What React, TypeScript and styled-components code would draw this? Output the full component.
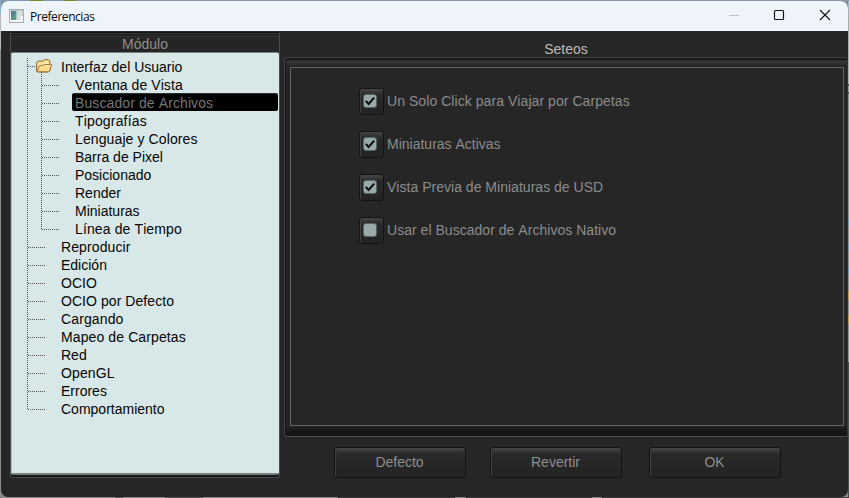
import React from 'react';
import styled, { createGlobalStyle, css } from 'styled-components';

const GlobalStyle = createGlobalStyle`
  * { box-sizing: border-box; }
  html, body { margin: 0; height: 100%; overflow: hidden; }
  body { font-family: "Liberation Sans", Arial, sans-serif; font-size: 14px; font-kerning: none; }
`;

const Desktop = styled.div`
  width: 849px;
  height: 498px;
  padding: 1px;
  background:
    linear-gradient(90deg, #7f9bbc 0 30px, #748b2a 30px 43px, #7f9bbc 43px 64px, #748b2a 64px 76px, #8796ae 76px 100%) 0 0 / 100% 1px no-repeat,
    linear-gradient(90deg, #8b8b8b 0 115px, #555 115px 123px, #8b8b8b 123px 165px, #555 165px 203px, #8b8b8b 203px 338px, #3a3a3a 338px 455px, #8a8a8a 455px 466px, #3a3a3a 466px 592px, #8a8a8a 592px 602px, #3a3a3a 602px 100%) 0 497px / 100% 1px no-repeat,
    linear-gradient(#8fb0cc 0 14px, #b5b9bc 14px 50px, #8c8c8c 50px 498px) 0 0 / 1px 100% no-repeat,
    linear-gradient(#9bb8cf 0 10px, #a9adb0 10px 84px, #555 84px 86px, #999 86px 92px, #555 92px 94px, #8f8f8f 94px 218px, #6d9db4 218px 226px, #8f8f8f 226px 244px, #6d9db4 244px 250px, #8f8f8f 250px 267px, #6d9db4 267px 274px, #8f8f8f 274px 291px, #b79a4c 291px 300px, #8f8f8f 300px 315px, #b79a4c 315px 324px, #8f8f8f 324px 362px, #4c4c4c 362px 498px) 848px 0 / 1px 100% no-repeat,
    #858b92;
`;

const Window = styled.div`
  height: 496px;
  width: 847px;
  border-radius: 7px;
  overflow: hidden;
  background: #262626;
  display: flex;
  flex-direction: column;
`;

const TitleBar = styled.header`
  flex: 0 0 30px;
  background: #eff4fb;
  color: #111;
  display: flex;
  align-items: center;
  padding-left: 8px;
  font: 12px "Open Sans", sans-serif;
`;

const Caption = styled.span`
  flex: 1;
  margin: 0 0 0 6px;
  letter-spacing: -0.45px;
  color: #080808;
`;

const Controls = styled.div`
  display: flex;
  width: 137px;
  svg { flex: 0 0 46px; height: 30px; display: block; }
`;

const Body = styled.main`
  flex: 1;
  display: flex;
`;

const ModulePanel = styled.section`
  width: 270px;
  height: 446px;
  margin: 1px 4px 0 9px;
  border: 1px solid #484b4b;
  border-top-color: #111;
  border-radius: 3px;
  background: #151515;
`;

const ModuleTitle = styled.h2`
  margin: 0;
  height: 19px;
  font: 14px/23px "Liberation Sans", Arial, sans-serif;
  font-kerning: none;
  text-align: center;
  color: #8f8f8f;
  background: linear-gradient(#3a3a3a 0 1px, #191919 1px 2px, #2c2c2c 2px, #252525 8px);
`;

const Tree = styled.ul`
  margin: 0;
  padding: 5px 1px 0 16px;
  height: 423px;
  list-style: none;
  border: 1px solid #718080;
  border-width: 1px 0 2px 1px;
  border-left-color: #b3c0c0;
  border-radius: 2px;
  background: #d8e8e8;
`;

const dots = (dir: string) => css`
  background: repeating-linear-gradient(${dir}, #4c5151 0 1px, transparent 1px 2px);
`;

const Row = styled.li<{ $child?: boolean; $first?: boolean; $last?: boolean }>`
  position: relative;
  display: flex;
  height: 18px;
  margin-left: -1px;
  padding-left: ${p => (p.$child ? 45 : 31)}px;
  color: #050505;
  line-height: 18px;
  white-space: nowrap;

  &::before {
    content: "";
    position: absolute;
    left: 0;
    top: 0;
    width: 1px;
    height: ${p => (p.$last ? 10 : 18)}px;
    ${dots('180deg')}
  }
  &::after {
    content: "";
    position: absolute;
    left: ${p => (p.$child ? 15 : 1)}px;
    top: ${p => (p.$first ? 8 : 9)}px;
    width: ${p => (p.$first ? 7 : 17)}px;
    height: 1px;
    ${dots('90deg')}
  }
`;

const Branch = styled.i<{ $end?: boolean; $start?: boolean }>`
  position: absolute;
  left: 14px;
  top: ${p => (p.$start ? 14 : 0)}px;
  width: 1px;
  height: ${p => (p.$start ? 4 : p.$end ? 10 : 18)}px;
  ${dots('180deg')}
`;

const Label = styled.span<{ $selected?: boolean; $track?: number }>`
  padding-left: 3px;
  height: 18px;
  letter-spacing: ${p => p.$track ?? 0}px;
  ${p => p.$selected && css`
    flex: 1;
    margin-top: -1px;
    border-radius: 2px;
    border-top: 1px solid #29302f;
    background: #000;
    color: #757575;
  `}
`;

const FolderIcon = styled.svg`
  position: absolute;
  left: 8px;
  top: 0;
`;

const Settings = styled.section`
  flex: 1;
  display: flex;
  flex-direction: column;
`;

const SettingsTitle = styled.h2`
  margin: 0;
  height: 26px;
  font: 14px/36px "Liberation Sans", Arial, sans-serif;
  font-kerning: none;
  color: #bcbcbc;
  text-align: center;
`;

const Frame = styled.div`
  height: 380px;
  border: 1px solid #424242;
  border-right-color: #343434;
  border-bottom-color: #505050;
  border-radius: 3px;
  padding: 9px 3px 10px 5px;
  box-shadow: inset 1px 1px #161616;
  background:
    linear-gradient(#111 0 1px, #1d1d1d 1px 2px, #393939 3px, #2b2b2b 7px, #242424 9px) 0 0 / 100% 9px no-repeat,
    linear-gradient(#242424, #1d1d1d 3px, #121212 7px, #191919 8px, #101010 10px) 0 100% / 100% 10px no-repeat,
    #242424;
`;

const Options = styled.div`
  height: 359px;
  border: 1px solid #646464;
  background: #262626;
  padding: 20px 0 0 68px;
  display: flex;
  flex-direction: column;
  gap: 16px;
`;

const Option = styled.label<{ $track?: number }>`
  height: 27px;
  display: flex;
  align-items: flex-start;
  gap: 3px;
  color: #8c8c8c;
  line-height: 26px;
  letter-spacing: ${p => p.$track ?? 0}px;
`;

const raised = css`
  border: 1px solid #131313;
  border-radius: 3px;
  box-shadow: inset 1px 0 #424242, inset 0 1px #444;
  background: linear-gradient(#464646 0, #373737 3px, #292929 6px, #232323 100%);
`;

const CheckButton = styled.span`
  width: 25px;
  height: 27px;
  padding: 5px 0 0 3px;
  ${raised}
  svg { display: block; }
`;

const Actions = styled.footer`
  display: flex;
  padding: 10px 0 0 50px;
`;

const Action = styled.button<{ $gap?: number }>`
  width: 132px;
  height: 31px;
  margin: 0 0 0 ${p => p.$gap ?? 0}px;
  padding: 0 1px 1px 0;
  font: 14px "Liberation Sans", Arial, sans-serif;
  font-kerning: none;
  color: #8e8e8e;
  ${raised}
`;

interface Item { text: string; track?: number }

const interfaceItems: Item[] = [
  { text: 'Ventana de Vista', track: 0.07 },
  { text: 'Buscador de Archivos', track: 0.1 },
  { text: 'Tipografías', track: 0.16 },
  { text: 'Lenguaje y Colores', track: 0.11 },
  { text: 'Barra de Pixel' },
  { text: 'Posicionado' },
  { text: 'Render' },
  { text: 'Miniaturas' },
  { text: 'Línea de Tiempo', track: 0.12 },
];
const modules: Item[] = [
  { text: 'Reproducir', track: 0.1 },
  { text: 'Edición' },
  { text: 'OCIO' },
  { text: 'OCIO por Defecto', track: 0.06 },
  { text: 'Cargando', track: 0.12 },
  { text: 'Mapeo de Carpetas', track: 0.11 },
  { text: 'Red' },
  { text: 'OpenGL', track: 0.1 },
  { text: 'Errores' },
  { text: 'Comportamiento' },
];
const options: (Item & { on: boolean })[] = [
  { text: 'Un Solo Click para Viajar por Carpetas', on: true, track: 0.06 },
  { text: 'Miniaturas Activas', on: true },
  { text: 'Vista Previa de Miniaturas de USD', on: true, track: 0.02 },
  { text: 'Usar el Buscador de Archivos Nativo', on: false, track: 0.03 },
];

const AppIcon = () => (
  <svg width="15" height="14" viewBox="0 0 15 14">
    <defs>
      <linearGradient id="pane" x1="0" y1="0" x2="1" y2="1">
        <stop stopColor="#4877a4" /><stop offset="1" stopColor="#59ad7b" />
      </linearGradient>
    </defs>
    <rect x=".5" y=".5" width="14" height="13" fill="#f5f6f7" stroke="#a6abb0" />
    <path d="M1 1.5h13" stroke="#c5cbd1" />
    <path d="M2 2h5.5v9H2z" fill="url(#pane)" />
    <path d="M8 2h3.5v9H8z" fill="#d5dce2" /><path d="M12 2h2v5h-2z" fill="#c8ddcf" />
  </svg>
);

const Folder = () => (
  <FolderIcon width="18" height="16" viewBox="0 0 18 16">
    <path d="M1.5 13V4.5L3 3h5l1.5-1.5h4L15 3v9.5L13.5 14H2.5z" fill="#e8bd66" stroke="#9b7440" />
    <path d="M2.5 12V5l1-1h5L10 2.5h3l1 1.5v2.5H5z" fill="#ffe7a6" />
    <path d="M2 13.8 4.2 8h4l1.5-1.5h7L14.8 12.5l-1.3 1.3z" fill="#ffda87" stroke="#9b7440" />
    <path d="M4.8 9h4L10.2 7.5h5.3" fill="none" stroke="#fff2c0" />
  </FolderIcon>
);

const CheckMark = ({ on }: { on: boolean }) => (
  <svg width="14" height="14" viewBox="0 0 14 14">
    <rect x=".5" y=".5" width="13" height="13" rx="2.5" fill="#99aaaa" stroke="#586363" />
    {on && <path d="M2.8 6.8 5.6 10l5.6-6.4" fill="none" stroke="#050707" strokeWidth="2" />}
  </svg>
);

export default function App() {
  return (
    <Desktop>
      <GlobalStyle />
      <Window>
        <TitleBar>
          <AppIcon />
          <Caption>Preferencias</Caption>
          <Controls>
            <svg viewBox="0 0 46 30"><path d="M18 14.5h10" stroke="#bdc1c6" /></svg>
            <svg viewBox="0 0 46 30"><rect x="17.5" y="9.5" width="9" height="9" rx="1" fill="none" stroke="#111" strokeWidth="1.2" /></svg>
            <svg viewBox="0 0 46 30"><path d="m17 9 10 10M27 9 17 19" stroke="#111" strokeWidth="1.1" /></svg>
          </Controls>
        </TitleBar>
        <Body>
          <ModulePanel>
            <ModuleTitle>Módulo</ModuleTitle>
            <Tree>
              <Row $first><Folder /><Branch $start /><Label>Interfaz del Usuario</Label></Row>
              {interfaceItems.map(({ text, track }, i) => (
                <Row key={text} $child>
                  <Branch $end={i === interfaceItems.length - 1} />
                  <Label $selected={i === 1} $track={track}>{text}</Label>
                </Row>
              ))}
              {modules.map(({ text, track }, i) => (
                <Row key={text} $last={i === modules.length - 1}><Label $track={track}>{text}</Label></Row>
              ))}
            </Tree>
          </ModulePanel>
          <Settings>
            <SettingsTitle>Seteos</SettingsTitle>
            <Frame>
              <Options>
                {options.map(({ text, on, track }) => (
                  <Option key={text} $track={track}>
                    <CheckButton role="checkbox" aria-checked={on} aria-label={text}><CheckMark on={on} /></CheckButton>
                    {text}
                  </Option>
                ))}
              </Options>
            </Frame>
            <Actions>
              <Action>Defecto</Action>
              <Action $gap={24}>Revertir</Action>
              <Action $gap={27}>OK</Action>
            </Actions>
          </Settings>
        </Body>
      </Window>
    </Desktop>
  );
}
